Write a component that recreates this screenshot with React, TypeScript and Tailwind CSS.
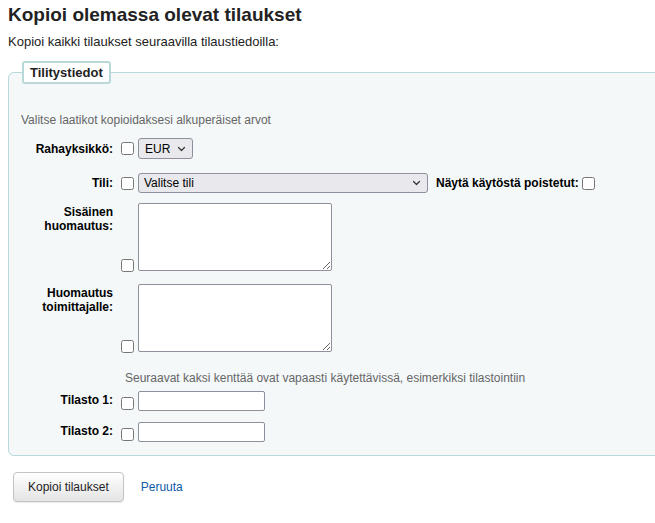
import React from 'react';

const Chevron: React.FC = () => (
  <svg className="pointer-events-none absolute right-[7px] top-1/2 -translate-y-1/2" width="9" height="6" viewBox="0 0 9 6" fill="none">
    <path d="M1.5 1.5l3 3 3-3" stroke="#333" strokeWidth="1.2" strokeLinecap="round" strokeLinejoin="round" />
  </svg>
);

const Label: React.FC<{ children: React.ReactNode; className?: string }> = ({ children, className }) => (
  <label className={`w-[92px] shrink-0 text-right font-bold leading-[14px] mr-[8px] ${className ?? ''}`}>{children}</label>
);

const Check: React.FC<{ className?: string }> = ({ className }) => (
  <input type="checkbox" className={`m-0 w-[13px] h-[13px] shrink-0 mr-[4px] ${className ?? ''}`} />
);

const App: React.FC = () => {
  return (
    <div className="w-full min-h-[523px] overflow-hidden bg-white font-['Liberation_Sans',Arial,sans-serif] text-[12px] text-black">
      <div className="px-2 pt-[4px]">
        <h1 className="text-[19px] font-bold leading-[22px] text-[#222]">Kopioi olemassa olevat tilaukset</h1>
        <p className="mt-[8px] text-[13px] leading-[16px] text-[#222]">Kopioi kaikki tilaukset seuraavilla tilaustiedoilla:</p>

        <fieldset className="mt-[11px] w-[680px] border border-[#b9d8d9] rounded-[6px] bg-[#f4f8f9] pl-[12px] pb-[13px]">
          <legend className="ml-[1px] border-2 border-[#b9d8d9] rounded-[3px] bg-white px-[6px] text-[13px] font-bold leading-[19px] text-[#222]">
            Tilitystiedot
          </legend>

          <p className="mt-[29px] leading-[14px] text-[#666]">Valitse laatikot kopioidaksesi alkuperäiset arvot</p>

          {/* Rahayksikkö */}
          <div className="mt-[11px] flex items-center">
            <Label>Rahayksikkö:</Label>
            <Check />
            <span className="relative inline-flex">
              <select className="appearance-none w-[55px] h-[21px] border border-[#8f8f9d] rounded-[3px] bg-[#e9e9ed] pl-[6px] text-[12px] text-black">
                <option>EUR</option>
              </select>
              <Chevron />
            </span>
          </div>

          {/* Tili */}
          <div className="mt-[14px] flex items-center">
            <Label>Tili:</Label>
            <Check />
            <span className="relative inline-flex">
              <select className="appearance-none w-[290px] h-[20px] border border-[#8f8f9d] rounded-[3px] bg-[#e9e9ed] pl-[5px] text-[12px] text-black">
                <option>Valitse tili</option>
              </select>
              <Chevron />
            </span>
            <span className="ml-[8px] font-bold mr-[3px]">Näytä käytöstä poistetut:</span>
            <input type="checkbox" className="m-0 w-[13px] h-[13px]" />
          </div>

          {/* Sisäinen huomautus */}
          <div className="mt-[10px] flex items-start">
            <Label className="mt-[2px]">Sisäinen huomautus:</Label>
            <div className="flex items-end">
              <Check className="mb-[-1px]" />
              <textarea className="block w-[194px] h-[68px] border border-[#8f8f9d] rounded-[2px] bg-white resize" />
            </div>
          </div>

          {/* Huomautus toimittajalle */}
          <div className="mt-[13px] flex items-start">
            <Label className="mt-[2px]">Huomautus toimittajalle:</Label>
            <div className="flex items-end">
              <Check className="mb-[-1px]" />
              <textarea className="block w-[194px] h-[68px] border border-[#8f8f9d] rounded-[2px] bg-white resize" />
            </div>
          </div>

          <p className="mt-[19px] ml-[104px] leading-[14px] text-[#666]">
            Seuraavat kaksi kenttää ovat vapaasti käytettävissä, esimerkiksi tilastointiin
          </p>

          {/* Tilasto 1 */}
          <div className="mt-[6px] flex items-center">
            <Label className="mb-[3px]">Tilasto 1:</Label>
            <div className="flex items-end">
              <Check className="mb-[1px]" />
              <input type="text" className="w-[127px] h-[20px] border border-[#8f8f9d] rounded-[2px] bg-white" />
            </div>
          </div>

          {/* Tilasto 2 */}
          <div className="mt-[11px] flex items-center">
            <Label className="mb-[3px]">Tilasto 2:</Label>
            <div className="flex items-end">
              <Check className="mb-[1px]" />
              <input type="text" className="w-[127px] h-[20px] border border-[#8f8f9d] rounded-[2px] bg-white" />
            </div>
          </div>
        </fieldset>

        <div className="mt-[16px] ml-[5px] flex items-center">
          <button className="h-[30px] px-[14px] border border-[#c3c3c3] rounded-[4px] bg-linear-to-b from-white to-[#e4e4e4] text-[12px] text-[#222] shadow-[0_1px_1px_rgba(0,0,0,0.08)]">
            Kopioi tilaukset
          </button>
          <a href="#" className="ml-[17px] text-[#0f5aa6]">Peruuta</a>
        </div>
      </div>
    </div>
  );
};

export default App;
